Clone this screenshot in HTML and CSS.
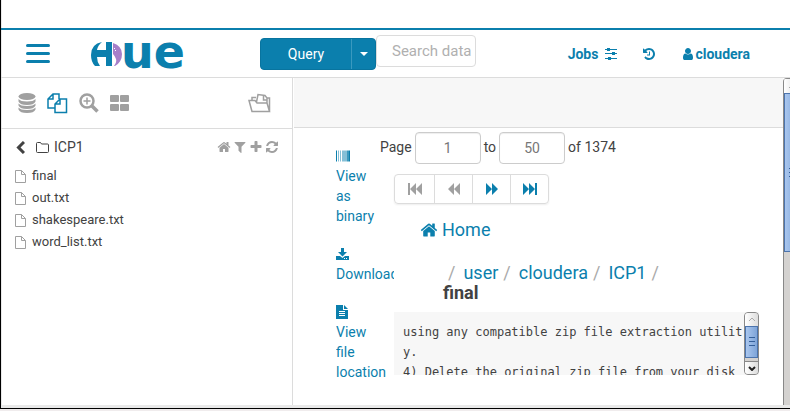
FILE: index.html
```html
<!DOCTYPE html>
<html lang="en">
<head>
<meta charset="utf-8">
<title>Hue - File Browser</title>
<link rel="stylesheet" href="styles.css">
</head>
<body>
<svg class="defs" aria-hidden="true">
  <symbol id="home" viewBox="0 0 1792 1792"><path d="M1472 992v480q0 26-19 45t-45 19h-384v-384h-256v384h-384q-26 0-45-19t-19-45v-480q0-1 .5-3t.5-3l575-474 575 474q1 2 1 6zm223-69l-62 74q-8 9-21 11h-3q-13 0-21-7l-692-577-692 577q-12 8-24 7-13-2-21-11l-62-74q-8-10-7-23.5t11-21.5l719-599q32-26 76-26t76 26l244 204v-195q0-14 9-23t23-9h192q14 0 23 9t9 23v408l219 182q10 8 11 21.5t-7 23.5z"/></symbol>
  <symbol id="file" viewBox="0 0 11 13"><path d="M.5.5h6l4 4v8H.5zM6.500.5v4h4" fill="none" stroke="currentColor"/></symbol>
</svg>
<div class="window">
  <div class="banner"></div>
  <header class="topbar">
    <button class="menu" aria-label="Menu"><span></span><span></span><span></span></button>
    <a class="logo" href="#" aria-label="Hue">
      <svg width="32" height="24" viewBox="0 0 32 24"><path d="M11 0Q0 2 0 13q0 7 4 11h5q-3-4-3-9h9v9h6V0h-6v8H6q1-5 5-8z"/><path class="whale" d="M22 1q9 3 9 11 0 8-7 12h-1q3-4 2-7-1-3-3-5z"/><path class="eye" d="M23 6h1v1h-1zM24 8h1v1h-1z"/></svg>
      <span class="wordmark">ue</span>
    </a>
    <div class="query"><button class="run">Query</button><button class="more" aria-label="More query types"><svg width="8" height="4" viewBox="0 0 8 4"><path d="M0 0h8L4 4z"/></svg></button></div>
    <input class="search" type="text" aria-label="Search data" placeholder="Search data">
    <nav class="links">
      <a href="#">Jobs <svg width="12" height="12" viewBox="0 0 12 12" class="jobs-icon"><path d="M0 1h12v1H0zM0 5h12v1H0zM0 10h12v1H0zM2 0h3v3H2zM7 4h3v3H7zM3 9h3v3H3z"/></svg></a>
      <a href="#" aria-label="History"><svg width="14" height="14" viewBox="0 0 1792 1792"><path d="M1664 896q0 156-61 298t-164 245-245 164-298 61q-172 0-327-72.500t-264-204.500q-7-10-6.500-22.500t8.500-20.500l137-138q10-9 25-9 16 2 23 12 73 95 179 147t225 52q104 0 198.500-40.500t163.500-109.500 109.500-163.500 40.500-198.500-40.500-198.500-109.500-163.500-163.500-109.500-198.500-40.500q-98 0-188 35.500t-160 101.500l137 138q31 30 14 69-17 40-59 40h-448q-26 0-45-19t-19-45v-448q0-42 40-59 39-17 69 14l130 129q107-101 244.500-156.500t284.500-55.500q156 0 298 61t245 164 164 245 61 298zm-640-288v448q0 14-9 23t-23 9h-320q-14 0-23-9t-9-23v-64q0-14 9-23t23-9h224v-352q0-14 9-23t23-9h64q14 0 23 9t9 23z"/></svg></a>
      <a class="user" href="#"><svg width="14" height="14" viewBox="0 0 1792 1792"><path d="M1536 1399q0 109-62.500 187t-150.500 78h-854q-88 0-150.500-78t-62.500-187q0-85 8.500-160.500t31.500-152 58.500-131 94-89 134.500-34.500q131 128 313 128t313-128q76 0 134.500 34.500t94 89 58.500 131 31.500 152 8.500 160.500zm-256-887q0 159-112.500 271.500t-271.500 112.500-271.500-112.500-112.500-271.500 112.500-271.500 271.500-112.500 271.500 112.500 112.500 271.500z"/></svg>cloudera</a>
    </nav>
  </header>
  <div class="body">
    <aside class="side">
      <div class="tabs">
        <button aria-label="Databases"><svg width="18" height="20" viewBox="0 0 18 20"><ellipse cx="9" cy="3.500" rx="8.500" ry="3.500"/><path d="M.5 6q2 2.500 8.500 2.500T17.500 6v2.500Q16 12 9 12T.5 8.500zM.5 10.500Q2.500 13 9 13t8.500-2.500v2Q16 16 9 16T.5 12.500zM.5 14.500Q2.500 17 9 17t8.500-2.500v2Q16 20 9 20T.5 16.500z"/></svg></button>
        <button class="on" aria-label="Files"><svg class="line" width="21" height="21" viewBox="0 0 21 21" stroke-width="1.500"><path d="M7.500 15H1V6l5-5h6v5M6 1v5H1M13 6h6.500v13.500H8V11zM13 6v5H8"/></svg></button>
        <button aria-label="Search"><svg class="line" width="20" height="20" viewBox="0 0 20 20"><circle cx="8" cy="8" r="6.500" stroke-width="2.500"/><path d="M8 4.500v7M4.500 8h7" stroke-width="1.500"/><path d="M13 13l5.500 5.500" stroke-width="3.500"/></svg></button>
        <button aria-label="Apps"><svg width="20" height="16" viewBox="0 0 20 16"><rect width="9" height="7" rx="1"/><rect x="10" width="9" height="7" rx="1"/><rect y="9" width="9" height="7" rx="1"/><rect x="10" y="9" width="9" height="7" rx="1"/></svg></button>
        <button class="last" aria-label="Documents"><svg class="line" width="24" height="20" viewBox="0 0 24 20" stroke-width="1.500"><path d="M4 18.500 1 7.500h6l2 2.500h10l2.500 8.500zM4 7V4.500h4M21.500 18.500V5H19M8.500 9 10 1.500l7 1 2 2.500v5M15.500 3v4h3"/></svg></button>
      </div>
      <div class="folder">
        <button class="back" aria-label="Back"><svg class="line" width="9" height="13" viewBox="0 0 9 13"><path d="M8 1 2.500 6.500 8 12" stroke-width="3"/></svg></button>
        <svg class="line" width="13" height="11" viewBox="0 0 13 11"><path d="M.5 9.500v-8q0-1 1-1h3l1 1.500h6q1 0 1 1v6.500q0 1-1 1h-10q-1 0-1-1z"/></svg>
        <span>ICP1</span>
        <div class="tools">
          <button aria-label="Home folder"><svg width="14" height="14"><use href="#home"/></svg></button>
          <button aria-label="Filter"><svg width="14" height="14" viewBox="0 0 1792 1792"><path d="M1595 295q17 41-14 70l-493 493v742q0 42-39 59-13 5-25 5-27 0-45-19l-256-256q-19-19-19-45v-486l-493-493q-31-29-14-70 17-39 59-39h1280q42 0 59 39z"/></svg></button>
          <button aria-label="Add"><svg width="14" height="14" viewBox="0 0 1792 1792"><path d="M1600 736v192q0 40-28 68t-68 28h-416v416q0 40-28 68t-68 28h-192q-40 0-68-28t-28-68v-416h-416q-40 0-68-28t-28-68v-192q0-40 28-68t68-28h416v-416q0-40 28-68t68-28h192q40 0 68 28t28 68v416h416q40 0 68 28t28 68z"/></svg></button>
          <button aria-label="Refresh"><svg width="14" height="14" viewBox="0 0 1792 1792"><path d="M1639 1056q0 5-1 7-64 268-268 434.500t-478 166.500q-146 0-282.500-55t-243.500-157l-129 129q-19 19-45 19t-45-19-19-45v-448q0-26 19-45t45-19h448q26 0 45 19t19 45-19 45l-137 137q71 66 161 102t187 36q134 0 250-65t186-179q11-17 53-117 8-23 30-23h192q13 0 22.500 9.500t9.500 22.500zm25-800v448q0 26-19 45t-45 19h-448q-26 0-45-19t-19-45 19-45l138-138q-148-137-349-137-134 0-250 65t-186 179q-11 17-53 117-8 23-30 23h-199q-13 0-22.500-9.500t-9.500-22.500v-7q65-268 270-434.500t480-166.500q146 0 284 55.500t245 156.500l130-129q19-19 45-19t45 19 19 45z"/></svg></button>
        </div>
      </div>
      <ul class="files">
        <li><svg width="11" height="13"><use href="#file"/></svg><a href="#">final</a></li>
        <li><svg width="11" height="13"><use href="#file"/></svg><a href="#">out.txt</a></li>
        <li><svg width="11" height="13"><use href="#file"/></svg><a href="#">shakespeare.txt</a></li>
        <li><svg width="11" height="13"><use href="#file"/></svg><a href="#">word_list.txt</a></li>
      </ul>
    </aside>
    <main class="main">
      <div class="strip"></div>
      <div class="viewer">
        <ul class="actions">
          <li><a href="#"><svg width="14" height="11" viewBox="0 0 14 11"><path d="M0 0h1v11H0zM13 0h1v11h-1z"/><path opacity=".5" d="M2 0h1v11H2zM4 0h1v11H4zM6 0h5v11H6z"/><path opacity=".8" d="M11 0h2v11h-2z"/></svg>View as binary</a></li>
          <li><a href="#"><svg width="13" height="12" viewBox="0 0 13 12"><path d="M5 0h3v4h3L6.500 8.500 2 4h3zM0 8h4l2.500 2L9 8h4v4H0z"/><path d="M8 10h1v1H8zM10 10h1v1h-1z" fill="#fff"/></svg>Download</a></li>
          <li><a href="#"><svg width="12" height="14" viewBox="0 0 12 14"><path d="M0 0h7v5h5v9H0zM8 0l4 4H8z"/><path d="M3 6h6v1H3zM3 8h6v1H3zM3 10h6v1H3z" fill="#fff"/></svg>View file location</a></li>
        </ul>
        <section class="content">
          <div class="pages"><label for="from">Page</label><input id="from" type="text" value="1"><label for="to">to</label><input id="to" type="text" value="50"><span>of 1374</span></div>
          <div class="pager">
            <button disabled aria-label="First page"><svg width="14" height="12" viewBox="0 0 14 12"><path d="M0 0h2v12H0zM8 0v12L2 6zM14 0v12L8 6z"/></svg></button>
            <button disabled aria-label="Previous page"><svg width="12" height="12" viewBox="0 0 12 12"><path d="M6 0v12L0 6zM12 0v12L6 6z"/></svg></button>
            <button aria-label="Next page"><svg width="12" height="12" viewBox="0 0 12 12"><path d="M0 0v12l6-6zM6 0v12l6-6z"/></svg></button>
            <button aria-label="Last page"><svg width="14" height="12" viewBox="0 0 14 12"><path d="M0 0v12l6-6zM6 0v12l6-6zM12 0h2v12h-2z"/></svg></button>
          </div>
          <a class="home" href="#"><svg width="18" height="18"><use href="#home"/></svg>Home</a>
          <nav class="crumbs"><i>/</i><a href="#">user</a><i>/</i><a href="#">cloudera</a><i>/</i><a href="#">ICP1</a><i>/</i><b>final</b></nav>
          <div class="text">
            <pre>using any compatible zip file extraction utilit
y.
4) Delete the original zip file from your disk</pre>
            <div class="bar" aria-hidden="true">
              <span class="arrow"><svg class="line" width="8" height="5" viewBox="0 0 8 5"><path d="M1 4l3-3 3 3"/></svg></span>
              <span class="thumb"><s></s><s></s><s></s></span>
              <span class="arrow down"><svg class="line" width="8" height="5" viewBox="0 0 8 5" stroke-width="2"><path d="M1 1l3 3 3-3"/></svg></span>
            </div>
          </div>
        </section>
      </div>
    </main>
    <div class="page-bar" aria-hidden="true"><span class="arrow"><svg class="line" width="8" height="5" viewBox="0 0 8 5"><path d="M1 4l3-3 3 3"/></svg></span><span class="thumb"><s></s><s></s><s></s></span></div>
  </div>
</div>
</body>
</html>
```
FILE: styles.css
```css
* { box-sizing: border-box; }
body { margin: 0; height: 100vh; overflow: hidden; background: #f0eced; color: #424242; font: 14px/20px Roboto, sans-serif; padding-bottom: 2px; }
svg { fill: currentColor; flex: none; }
svg.line { fill: none; stroke: currentColor; }
.defs { display: none; }
a { color: #0b7fad; text-decoration: none; }
button { margin: 0; padding: 0; border: 0; background: none; color: inherit; font: inherit; display: flex; align-items: center; justify-content: center; }
ul { margin: 0; padding: 0; list-style: none; }
.window { height: 100%; display: flex; flex-direction: column; background: #fff; border-left: 1px solid #000; border-bottom: 1px solid #000; box-shadow: inset 1px -3px #e9e9e9; }
.banner { height: 30px; border-bottom: 2px solid #0b7fad; }

.topbar { flex: none; height: 48px; display: flex; align-items: center; padding: 0 40px 0 25px; border-bottom: 1px solid #dcdcdc; }
.menu { flex-direction: column; gap: 5px; }
.menu span { width: 24px; height: 3px; border-radius: 2px; background: #0b7fad; }
.logo { display: flex; margin-left: 41px; width: 96px; height: 24px; }
.whale { fill: #a77fc9; }
.eye { fill: #fff; }
.wordmark { font: bold 46px/24px "DejaVu Sans", sans-serif; margin: -2px 0 0 -2px; }
.query { display: flex; flex: none; margin-left: 73px; height: 32px; color: #fff; background: #0b7fad; border: 1px solid #08749f; border-radius: 4px; }
.run { width: 90px; }
.more { width: 24px; border-left: 1px solid #3a99bf; }
.search { flex: none; width: 100px; height: 32px; margin-bottom: 6px; padding: 0 0 0 15px; border: 1px solid #dcdcdc; border-radius: 4px; font: 15px Roboto, sans-serif; }
.search::placeholder { color: #b0b0b0; }
.links { margin-left: auto; display: flex; gap: 25px; font-weight: bold; }
.links a { display: flex; align-items: center; }
.jobs-icon { margin-left: 7px; }

.body { flex: 1; min-height: 0; display: flex; margin-bottom: 3px; }
.side { flex: none; width: 292px; border-right: 1px solid #dcdcdc; }
.tabs { height: 51px; display: flex; align-items: center; gap: 11px; padding: 0 20px 0 17px; color: #a0a0a0; border-bottom: 1px solid #dcdcdc; }
.on { color: #0b7fad; }
.last { margin-left: auto; }
.folder { display: flex; align-items: center; height: 36px; padding: 0 13px 0 15px; }
.back { margin-right: 11px; }
.folder > span { margin-left: 5px; }
.tools { display: flex; gap: 2px; margin-left: auto; color: #a0a0a0; }
.files { padding-left: 14px; font-size: 13px; line-height: 22px; }
.files li { display: flex; align-items: center; gap: 6px; color: #a0a0a0; }
.files a { color: #424242; }

.main { flex: 1; min-width: 0; margin-left: 1px; }
.strip { height: 50px; background: #f7f7f7; border-bottom: 1px solid #dcdcdc; }
.viewer { display: flex; padding: 4px 24px 0 42px; }
.actions { flex: none; width: 58px; overflow: hidden; padding-top: 14px; display: flex; flex-direction: column; gap: 18px; }
.actions a { display: block; width: 46px; }
.actions svg { display: block; height: 14px; margin: 3px 0; }
.content { flex: 1; min-width: 0; }
.pages { display: flex; align-items: flex-start; gap: 3px; margin-left: -14px; line-height: 30px; }
.pages input { width: 66px; height: 32px; border: 1px solid #ccc; border-radius: 4px; text-align: center; color: #777; font: 14px Roboto, sans-serif; box-shadow: inset 0 1px 1px #eee; }
.pager { display: flex; width: max-content; height: 30px; margin-top: 10px; border: 1px solid #dcdcdc; border-radius: 4px; box-shadow: 0 1px 2px #eee; color: #0b7fad; }
.pager button { width: 39px; }
.pager button + button { width: 38px; border-left: 1px solid #dcdcdc; }
.pager button:disabled { color: #a0a0a0; }
.home { display: flex; align-items: center; gap: 4px; margin: 16px 0 0 26px; font-size: 18px; }
.crumbs { display: flex; flex-wrap: wrap; margin: 23px 80px 0 49px; font-size: 18px; }
.crumbs i { padding: 0 8px 0 5px; color: #aaa; font-style: normal; }
.crumbs b { flex-basis: 100%; }
.text { display: flex; height: 63px; margin-top: 9px; background: #f7f7f7; overflow: hidden; }
.text pre { flex: 1; min-width: 0; margin: 0; padding: 10px 0 0 9px; font: 12px/20px "DejaVu Sans Mono", monospace; }
.bar { display: flex; flex-direction: column; width: 15px; background: #d4d2d0; border: 1px solid #888; border-radius: 4px; overflow: hidden; }
.arrow { flex: none; height: 13px; display: flex; align-items: center; justify-content: center; color: #aaa; background: linear-gradient(90deg, #fff, #ddd); }
.down { margin-top: auto; color: #222; border-top: 1px solid #888; }
.thumb { flex: none; height: 32px; display: flex; flex-direction: column; align-items: center; justify-content: center; gap: 2px; background: linear-gradient(90deg, #a9c6ee, #7ea4d8); border: 1px solid #4c74ad; }
.thumb s { width: 6px; height: 2px; border-top: 1px solid #345f99; }
.page-bar { flex: none; width: 7px; overflow: hidden; background: #d4d2d0; border-left: 1px solid #888; border-top-left-radius: 4px; }
.page-bar .arrow { width: 15px; height: 15px; border-top: 1px solid #888; }
.page-bar .thumb { width: 15px; height: 159px; }
```
